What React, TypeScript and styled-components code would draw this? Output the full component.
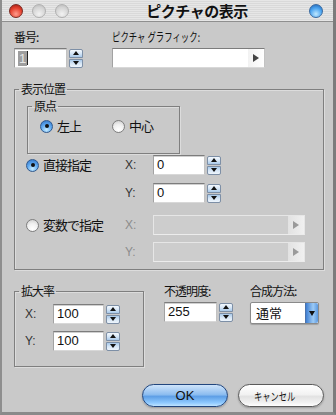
import { createGlobalStyle, styled } from "styled-components"

const GlobalStyle = createGlobalStyle`
  html, body { margin: 0; padding: 0; background: #fff; }
  body { font-family: "Noto Sans CJK JP", "Noto Sans", sans-serif; color: #000; }
  * { box-sizing: border-box; }
`

const LABEL_FONT = `"Noto Sans CJK JP", "Noto Sans", sans-serif`
const NUM_FONT = `"Liberation Sans", "Noto Sans CJK JP", sans-serif`

function Spinner() {
  return (
    <SpinBox>
      <SpinHalf $up />
      <SpinHalf />
    </SpinBox>
  )
}

function NumberField({ value, width, selected }: { value: string; width: number; selected?: boolean }) {
  return (
    <NumRow>
      <TextBox $width={width}>
        {selected ? (
          <>
            <Selection>{value}</Selection>
            <Caret />
          </>
        ) : (
          value
        )}
      </TextBox>
      <Spinner />
    </NumRow>
  )
}

function PopupField({ width, disabled }: { width: number; disabled?: boolean }) {
  return (
    <Popup $width={width} $disabled={disabled}>
      <PopupArrow $disabled={disabled} />
    </Popup>
  )
}

function Radio({ checked, label }: { checked?: boolean; label: string }) {
  return (
    <RadioRow>
      <RadioDot $checked={checked} />
      <RadioText>{label}</RadioText>
    </RadioRow>
  )
}

export default function App() {
  return (
    <>
      <GlobalStyle />
      <Window>
        <TitleBar>
          <Lights>
            <Light $kind="red" />
            <Light $kind="gray" />
            <Light $kind="gray" />
          </Lights>
          <Title>ピクチャの表示</Title>
          <Light $kind="blue" />
        </TitleBar>

        <Body>
          <TopRow>
            <Column>
              <Label>番号:</Label>
              <NumberField value="1" width={53} selected />
            </Column>
            <Column>
              <Label>
                <Narrow $scale={0.7}>ピクチャ グラフィック:</Narrow>
              </Label>
              <PopupField width={153} />
            </Column>
          </TopRow>

          <Group $width={310}>
            <Legend>表示位置</Legend>
            <OriginGroup>
              <Legend>原点</Legend>
              <RadioPair>
                <Radio checked label="左上" />
                <Radio label="中心" />
              </RadioPair>
            </OriginGroup>

            <PositionGrid>
              <Radio checked label="直接指定" />
              <AxisLabel>X:</AxisLabel>
              <NumberField value="0" width={52} />

              <span />
              <AxisLabel>Y:</AxisLabel>
              <NumberField value="0" width={52} />
            </PositionGrid>

            <VariableGrid>
              <Radio label="変数で指定" />
              <AxisLabel $disabled>X:</AxisLabel>
              <PopupField width={152} disabled />

              <span />
              <AxisLabel $disabled>Y:</AxisLabel>
              <PopupField width={152} disabled />
            </VariableGrid>
          </Group>

          <BottomRow>
            <ScaleGroup $width={130}>
              <Legend>拡大率</Legend>
              <ScaleGrid>
                <AxisLabel>X:</AxisLabel>
                <NumberField value="100" width={51} />
                <AxisLabel>Y:</AxisLabel>
                <NumberField value="100" width={51} />
              </ScaleGrid>
            </ScaleGroup>

            <Column>
              <Label>不透明度:</Label>
              <NumberField value="255" width={53} />
            </Column>

            <Column>
              <Label>合成方法:</Label>
              <Select>
                <SelectValue>通常</SelectValue>
                <SelectButton />
              </Select>
            </Column>
          </BottomRow>

          <Buttons>
            <AquaButton $primary>OK</AquaButton>
            <AquaButton>
              <Narrow $scale={0.75}>キャンセル</Narrow>
            </AquaButton>
          </Buttons>
        </Body>
      </Window>
    </>
  )
}

const Window = styled.div`
  width: 336px;
  height: 415px;
  display: flex;
  flex-direction: column;
  background: #c9c9c9;
  border-left: 2px solid #8e8e8e;
  border-right: 3px solid #7c7c7c;
  border-bottom: 3px solid #8a8a8a;
  overflow: hidden;
`

const TitleBar = styled.div`
  height: 22px;
  flex: none;
  display: flex;
  align-items: center;
  padding: 0 10px 0 7px;
  border-bottom: 1px solid #8f8f8f;
  background: repeating-linear-gradient(
    to bottom,
    #e6e6e6 0px,
    #e6e6e6 1px,
    #d9d9d9 1px,
    #d9d9d9 2px
  );
`

const Lights = styled.div`
  display: flex;
  gap: 9px;
`

const Light = styled.div<{ $kind: "red" | "gray" | "blue" }>`
  width: 14px;
  height: 14px;
  border-radius: 50%;
  flex: none;
  ${({ $kind }) =>
    $kind === "red"
      ? `
    background: radial-gradient(circle at 50% 75%, #ff9c8c 0%, #e5412f 55%, #9a1a10 100%);
    border: 1px solid #7a2a22;
  `
      : $kind === "blue"
        ? `
    background: radial-gradient(circle at 50% 75%, #bfe8ff 0%, #4aa3ef 55%, #1e5fb0 100%);
    border: 1px solid #3a6aa0;
  `
        : `
    background: radial-gradient(circle at 50% 75%, #f2f2f2 0%, #d4d4d4 60%, #b6b6b6 100%);
    border: 1px solid #b0b0b0;
  `}
`

const Title = styled.div`
  flex: 1;
  text-align: center;
  font: bold 15px/20px ${LABEL_FONT};
  letter-spacing: -0.5px;
  color: #111;
  padding-left: 16px;
`

const Body = styled.div`
  flex: 1;
  display: flex;
  flex-direction: column;
  padding: 8px 0 0 12px;
`

const TopRow = styled.div`
  display: grid;
  grid-template-columns: 98px 1fr;
`

const Column = styled.div`
  display: flex;
  flex-direction: column;
  gap: 4px;
`

const Label = styled.div`
  font: 12px/14px ${LABEL_FONT};
  letter-spacing: -1px;
  color: #111;
  white-space: nowrap;
`

const Narrow = styled.span<{ $scale: number }>`
  display: inline-block;
  letter-spacing: 0;
  white-space: nowrap;
  transform: scaleX(${({ $scale }) => $scale});
  transform-origin: left center;
`

const NumRow = styled.div`
  display: flex;
  align-items: center;
  gap: 2px;
`

const TextBox = styled.div<{ $width: number }>`
  width: ${({ $width }) => $width}px;
  height: 20px;
  display: flex;
  align-items: center;
  background: #fff;
  border: 1px solid;
  border-color: #7c7c7c #c2c2c2 #d8d8d8 #a2a2a2;
  box-shadow: inset 0 1px 0 #d0d0d0;
  padding: 0 3px;
  font: 13px/18px ${NUM_FONT};
  color: #111;
`

const Selection = styled.span`
  background: #9e9e9e;
  color: #e6e6e6;
  padding: 0 1px;
  line-height: 15px;
`

const Caret = styled.span`
  width: 1px;
  height: 14px;
  background: #222;
`

const SpinBox = styled.div`
  display: flex;
  flex-direction: column;
  gap: 1px;
`

const SpinHalf = styled.div<{ $up?: boolean }>`
  width: 14px;
  height: 9px;
  border: 1px solid #7d8fa6;
  border-radius: ${({ $up }) => ($up ? "2px 2px 0 0" : "0 0 2px 2px")};
  background: ${({ $up }) =>
    $up
      ? "linear-gradient(to bottom, #f4f9fe 0%, #d6e6f6 50%, #a8c9ea 100%)"
      : "linear-gradient(to bottom, #a8c9ea 0%, #d6e6f6 50%, #eef5fc 100%)"};
  display: flex;
  align-items: center;
  justify-content: center;

  &::after {
    content: "";
    border-left: 3px solid transparent;
    border-right: 3px solid transparent;
    ${({ $up }) => ($up ? "border-bottom: 4px solid #111;" : "border-top: 4px solid #111;")}
  }
`

const Popup = styled.div<{ $width: number; $disabled?: boolean }>`
  width: ${({ $width }) => $width}px;
  height: 20px;
  display: flex;
  justify-content: flex-end;
  background: ${({ $disabled }) => ($disabled ? "#cdcdcd" : "#fff")};
  border: 1px solid;
  border-color: ${({ $disabled }) =>
    $disabled ? "#e6e6e6 #e6e6e6 #ececec #e6e6e6" : "#7c7c7c #c2c2c2 #d8d8d8 #a2a2a2"};
`

const PopupArrow = styled.div<{ $disabled?: boolean }>`
  width: 16px;
  height: 100%;
  display: flex;
  align-items: center;
  justify-content: center;
  background: ${({ $disabled }) =>
    $disabled ? "linear-gradient(to right, #e2e2e2, #f0f0f0)" : "linear-gradient(to right, #f2f2f2, #ffffff)"};

  &::after {
    content: "";
    border-top: 4px solid transparent;
    border-bottom: 4px solid transparent;
    border-left: 6px solid ${({ $disabled }) => ($disabled ? "#9a9a9a" : "#444")};
  }
`

const Group = styled.fieldset<{ $width: number }>`
  width: ${({ $width }) => $width}px;
  margin: 14px 0 0 0;
  padding: 0;
  border: 1px solid #7f7f7f;
  box-shadow: inset 1px 1px 0 #dcdcdc, 1px 1px 0 #dcdcdc;
  min-width: 0;
`

const Legend = styled.legend`
  font: 12px/14px ${LABEL_FONT};
  letter-spacing: -1px;
  color: #111;
  margin-left: 4px;
  padding: 0 2px;
`

const OriginGroup = styled.fieldset`
  width: 153px;
  margin: 3px 0 0 12px;
  padding: 5px 0 0 0;
  height: 55px;
  border: 1px solid #7f7f7f;
  box-shadow: inset 1px 1px 0 #dcdcdc, 1px 1px 0 #dcdcdc;
`

const RadioPair = styled.div`
  display: grid;
  grid-template-columns: 72px 1fr;
  padding-left: 12px;
`

const RadioRow = styled.div`
  display: flex;
  align-items: center;
  gap: 4px;
`

const RadioDot = styled.div<{ $checked?: boolean }>`
  width: 13px;
  height: 13px;
  border-radius: 50%;
  flex: none;
  display: flex;
  align-items: center;
  justify-content: center;
  ${({ $checked }) =>
    $checked
      ? `
    border: 1px solid #30598e;
    background: radial-gradient(circle at 50% 80%, #c6ecff 0%, #5fa8ef 50%, #2b6fc4 100%);
    &::after {
      content: "";
      width: 4px;
      height: 4px;
      border-radius: 50%;
      background: #111;
    }
  `
      : `
    border: 1px solid #7e7e7e;
    background: radial-gradient(circle at 50% 80%, #ffffff 0%, #f0f0f0 50%, #c9c9c9 100%);
  `}
`

const RadioText = styled.span`
  font: 13px/16px ${LABEL_FONT};
  letter-spacing: -1px;
  color: #111;
`

const PositionGrid = styled.div`
  display: grid;
  grid-template-columns: 98px 29px 1fr;
  grid-auto-rows: 20px;
  row-gap: 8px;
  align-items: center;
  padding: 1px 0 0 11px;
`

const VariableGrid = styled(PositionGrid)`
  row-gap: 7px;
  padding: 12px 0 7px 11px;
`

const AxisLabel = styled.span<{ $disabled?: boolean }>`
  font: 12px/14px ${NUM_FONT};
  color: ${({ $disabled }) => ($disabled ? "#8c8c8c" : "#333")};
  padding-left: 1px;
`

const BottomRow = styled.div`
  display: grid;
  grid-template-columns: 150px 86px 1fr;
  align-items: start;
  margin-top: 14px;
`

const ScaleGroup = styled(Group)`
  margin: 0;
  height: 83px;
`

const ScaleGrid = styled.div`
  display: grid;
  grid-template-columns: 29px 1fr;
  row-gap: 7px;
  align-items: center;
  padding: 6px 0 0 9px;
`

const Select = styled.div`
  width: 69px;
  height: 22px;
  display: flex;
  background: #fff;
  border: 1px solid #8a8a8a;
  border-radius: 2px;
  box-shadow: 0 1px 1px rgba(0, 0, 0, 0.2);
`

const SelectValue = styled.div`
  flex: 1;
  font: 13px/20px ${LABEL_FONT};
  padding-left: 5px;
  color: #111;
`

const SelectButton = styled.div`
  width: 13px;
  display: flex;
  align-items: center;
  justify-content: center;
  border-left: 1px solid #4b74ae;
  border-radius: 0 2px 2px 0;
  background: linear-gradient(to right, #3f7fd2, #9ccaf5 60%, #5a98e0);

  &::after {
    content: "";
    border-left: 3px solid transparent;
    border-right: 3px solid transparent;
    border-top: 5px solid #111;
  }
`

const Buttons = styled.div`
  display: flex;
  justify-content: flex-end;
  gap: 10px;
  margin-top: 17px;
  padding-right: 9px;
`

const AquaButton = styled.div<{ $primary?: boolean }>`
  width: 86px;
  height: 23px;
  border-radius: 12px;
  display: flex;
  align-items: center;
  justify-content: center;
  font: ${({ $primary }) => ($primary ? `13px ${NUM_FONT}` : `11px ${LABEL_FONT}`)};
  color: #111;
  border: 1px solid ${({ $primary }) => ($primary ? "#22467e" : "#5a5a5a")};
  background: ${({ $primary }) =>
    $primary
      ? "linear-gradient(to bottom, #cfe4fa 0%, #8dbdf0 45%, #5e9fe6 55%, #8fcaff 85%, #bfe4ff 100%)"
      : "linear-gradient(to bottom, #ffffff 0%, #f2f2f2 45%, #e2e2e2 55%, #f2f2f2 85%, #ffffff 100%)"};
  box-shadow: 0 1px 2px rgba(0, 0, 0, 0.25);
`
